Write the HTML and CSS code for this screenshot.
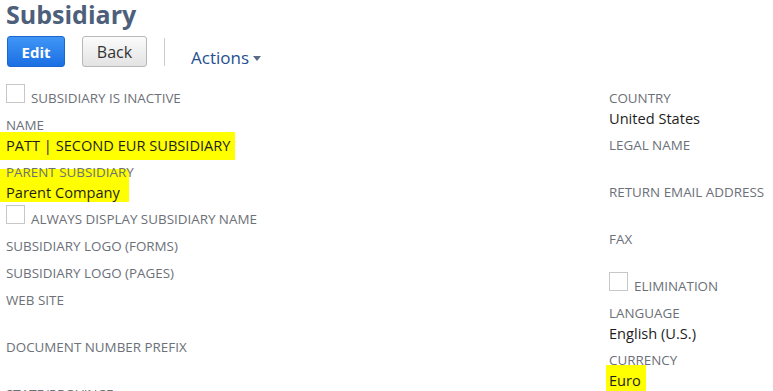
FILE: index.html
```html
<!DOCTYPE html>
<html lang="en">
<head>
    <meta charset="UTF-8">
    <meta name="viewport" content="width=device-width, initial-scale=1.0">
    <title>Subsidiary</title>
    <link rel="stylesheet" href="styles.css">
</head>
<body>
    <div class="page">
        <h1 class="title">Subsidiary</h1>

        <div class="toolbar">
            <button class="btn btn-primary">Edit</button>
            <button class="btn btn-default">Back</button>
            <span class="divider"></span>
            <span class="actions">Actions <span class="caret"></span></span>
        </div>

        <div class="record">
            <div class="column">
                <div class="check">
                    <span class="box"></span>
                    <span class="label">Subsidiary is inactive</span>
                </div>
                <div class="field">
                    <div class="label">Name</div>
                    <div class="value"><span class="mark mark-name">PATT | SECOND EUR SUBSIDIARY</span></div>
                </div>
                <div class="field">
                    <div class="label label-top">Parent Subsidiary</div>
                    <div class="value"><span class="mark mark-parent">Parent Company</span></div>
                </div>
                <div class="check">
                    <span class="box"></span>
                    <span class="label">Always display subsidiary name</span>
                </div>
                <div class="field">
                    <div class="label">Subsidiary logo (forms)</div>
                </div>
                <div class="field">
                    <div class="label">Subsidiary logo (pages)</div>
                </div>
                <div class="field">
                    <div class="label">Web site</div>
                    <div class="value"></div>
                </div>
                <div class="field">
                    <div class="label">Document number prefix</div>
                    <div class="value"></div>
                </div>
                <div class="field">
                    <div class="label">State/Province</div>
                </div>
            </div>

            <div class="column">
                <div class="field">
                    <div class="label">Country</div>
                    <div class="value">United States</div>
                </div>
                <div class="field">
                    <div class="label">Legal name</div>
                    <div class="value"></div>
                </div>
                <div class="field">
                    <div class="label">Return email address</div>
                    <div class="value"></div>
                </div>
                <div class="field">
                    <div class="label">Fax</div>
                    <div class="value"></div>
                </div>
                <div class="check">
                    <span class="box"></span>
                    <span class="label">Elimination</span>
                </div>
                <div class="field">
                    <div class="label">Language</div>
                    <div class="value">English (U.S.)</div>
                </div>
                <div class="field">
                    <div class="label label-top">Currency</div>
                    <div class="value"><span class="mark mark-euro">Euro</span></div>
                </div>
            </div>
        </div>
    </div>
</body>
</html>
```

FILE: styles.css
```css
body {
    margin: 0;
    background: #ffffff;
    font-family: "Open Sans", Arial, sans-serif;
    overflow: hidden;
}

.page {
    padding: 0 0 0 6px;
}

.title {
    margin: 0;
    font-size: 25px;
    line-height: 28px;
    font-weight: 700;
    color: #4d5f7a;
}

.toolbar {
    display: flex;
    align-items: center;
    margin-top: 8px;
    height: 31px;
}

.btn {
    height: 31px;
    border-radius: 3px;
    font-family: "Open Sans", Arial, sans-serif;
    padding: 0;
    cursor: pointer;
}

.btn-primary {
    width: 58px;
    margin-left: 1px;
    background: linear-gradient(#4096f6, #1b6fe3);
    border: 1px solid #1b66cf;
    color: #ffffff;
    font-size: 15px;
    font-weight: 700;
}

.btn-default {
    width: 65px;
    margin-left: 17px;
    background: linear-gradient(#fbfbfb, #e3e3e3);
    border: 1px solid #b8b8b8;
    color: #333333;
    font-size: 16px;
}

.divider {
    width: 1px;
    height: 28px;
    margin-left: 17px;
    background: #cccccc;
}

.actions {
    display: flex;
    align-items: center;
    margin-left: 26px;
    margin-top: 11px;
    font-size: 17px;
    color: #24508f;
}

.caret {
    width: 0;
    height: 0;
    margin-left: 4px;
    margin-top: 2px;
    border-left: 4.5px solid transparent;
    border-right: 4.5px solid transparent;
    border-top: 5px solid #5a6b85;
}

.record {
    display: grid;
    grid-template-columns: 603px 1fr;
    padding-top: 21px;
}

.column {
    display: flex;
    flex-direction: column;
    gap: 7px;
}

.label {
    font-size: 13.4px;
    line-height: 20px;
    height: 20px;
    text-transform: uppercase;
    color: #6c7078;
    white-space: nowrap;
}

/* keeps label text painted above the marker highlight below it */
.label-top {
    position: relative;
}

.value {
    font-size: 14.6px;
    line-height: 20px;
    height: 20px;
    color: #1e1e1e;
    white-space: nowrap;
}

.check {
    display: flex;
    align-items: flex-start;
    height: 20px;
}

.box {
    box-sizing: border-box;
    width: 19px;
    height: 19px;
    margin-top: -4px;
    border: 1px solid #c7c7c7;
    background: #ffffff;
}

.check .label {
    margin-left: 6px;
}

.mark {
    background: #ffff00;
}

.mark-name {
    margin-left: -6px;
    padding: 3px 5px 5px 6px;
}

.mark-parent {
    margin-left: -6px;
    padding: 13px 9px 0 6px;
}

.mark-euro {
    margin-left: -3px;
    padding: 5px 5px 6px 3px;
}
```
